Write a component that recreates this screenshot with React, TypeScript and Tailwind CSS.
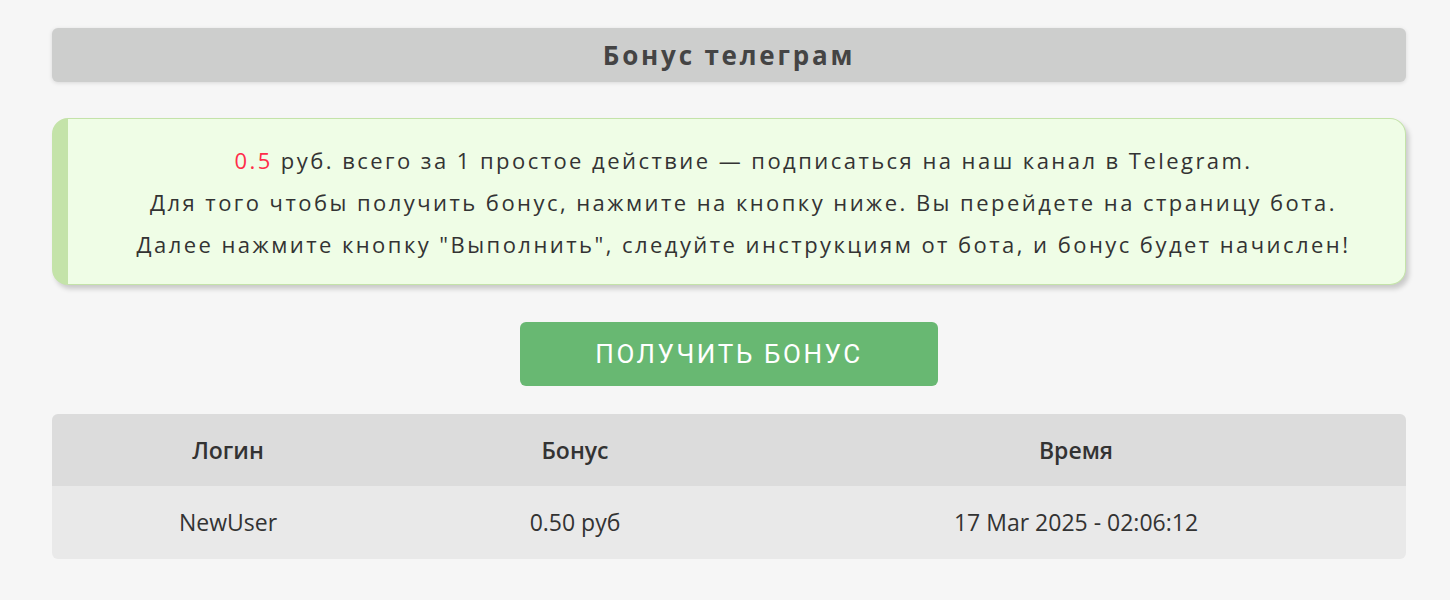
export default function App() {
  const font = { fontFamily: '"Open Sans", "Noto Sans", sans-serif' };
  return (
    <div className="min-h-[600px] w-full bg-[#f6f6f6] pl-[52px] pr-[44px] pt-[28px] pb-[40px]" style={font}>
      {/* Title bar */}
      <div className="flex h-[54px] items-center justify-center rounded-[6px] bg-[#cdcecd] shadow-[0_1px_4px_rgba(0,0,0,0.12)]">
        <h1 className="text-[26px] font-bold tracking-[2.8px] text-[#444]">Бонус телеграм</h1>
      </div>

      {/* Info box */}
      <div className="mt-[36px] flex h-[167px] flex-col items-center justify-center rounded-[16px] border border-l-[16px] border-[#c4e3a9] bg-[#effde6] pl-[14px] text-[22px] leading-[42px] tracking-[2.45px] text-[#333] shadow-[3px_4px_5px_rgba(0,0,0,0.18)]">
        <p>
          <span className="text-[#ff2d4a]">0.5</span> руб. всего за 1 простое действие — подписаться на наш канал в Telegram.
        </p>
        <p>Для того чтобы получить бонус, нажмите на кнопку ниже. Вы перейдете на страницу бота.</p>
        <p>Далее нажмите кнопку "Выполнить", следуйте инструкциям от бота, и бонус будет начислен!</p>
      </div>

      {/* Button */}
      <div className="mt-[37px] flex justify-center">
        <button
          className="h-[64px] w-[418px] rounded-[6px] bg-[#68b872] text-[26px] uppercase tracking-[2.6px] text-white"
          style={{ fontFamily: 'Roboto, "Open Sans", sans-serif' }}
        >
          Получить бонус
        </button>
      </div>

      {/* Table */}
      <div className="mt-[28px] overflow-hidden rounded-[6px] text-[23px] text-[#333]">
        <div className="grid h-[72px] grid-cols-[352px_342px_1fr] items-center bg-[#dcdcdc] text-center font-semibold">
          <div>Логин</div>
          <div>Бонус</div>
          <div>Время</div>
        </div>
        <div className="grid h-[73px] grid-cols-[352px_342px_1fr] items-center bg-[#e9e9e9] text-center">
          <div>NewUser</div>
          <div>0.50 руб</div>
          <div>17 Mar 2025 - 02:06:12</div>
        </div>
      </div>
    </div>
  );
}
